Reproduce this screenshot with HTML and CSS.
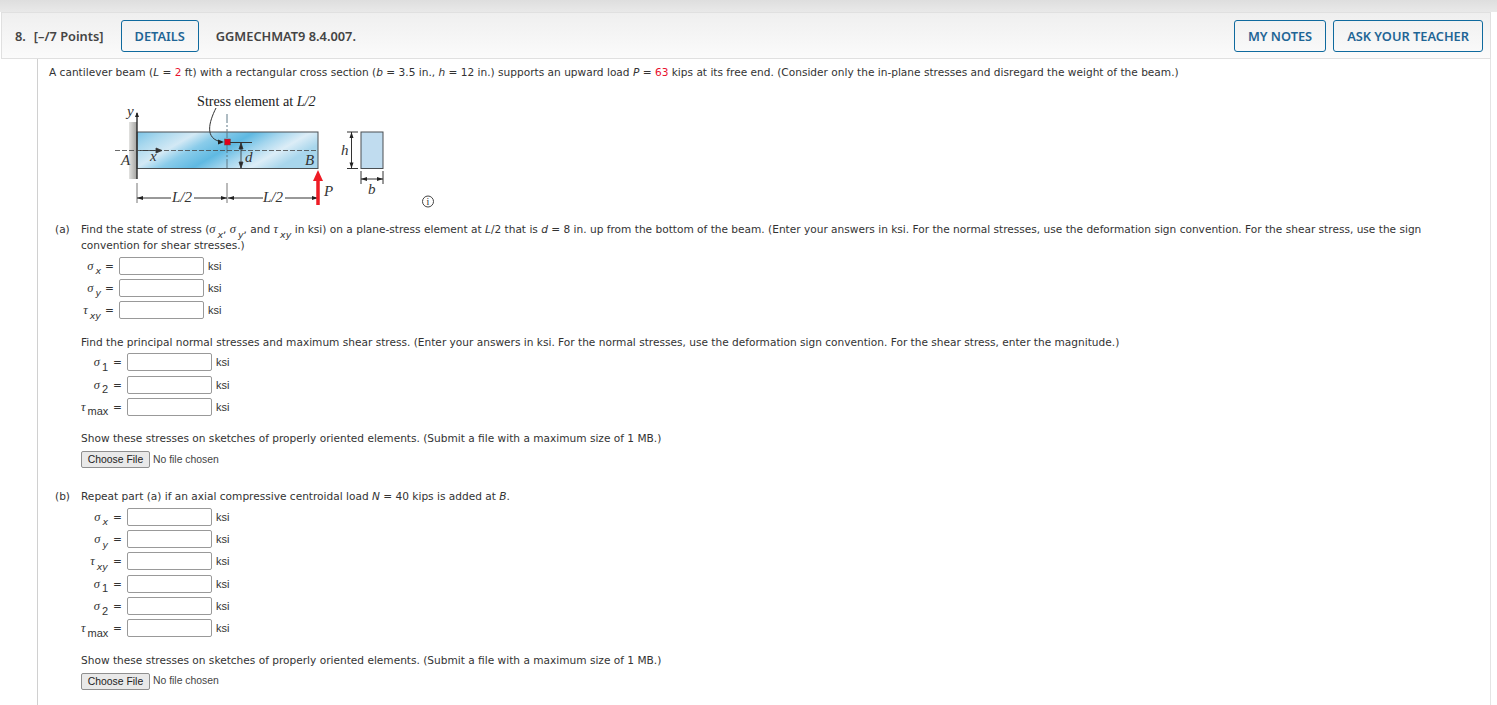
FILE: index.html
```html
<!DOCTYPE html>
<html lang="en">
<head>
  <meta charset="UTF-8">
  <meta name="viewport" content="width=device-width, initial-scale=1.0">
  <title>Question 8</title>
  <link rel="stylesheet" href="styles.css">
</head>
<body>

  <div class="question">
    <!-- Header bar -->
    <div class="header">
      <span class="number">8.</span>
      <span class="points">[&ndash;/7 Points]</span>
      <button class="btn details">DETAILS</button>
      <span class="code">GGMECHMAT9 8.4.007.</span>
      <button class="btn notes">MY NOTES</button>
      <button class="btn">ASK YOUR TEACHER</button>
    </div>

    <!-- Question body -->
    <div class="content">
      <p class="intro">A cantilever beam (<i>L</i> = <span class="red">2</span> ft) with a rectangular cross section (<i>b</i> = 3.5 in., <i>h</i> = 12 in.) supports an upward load <i>P</i> = <span class="red">63</span> kips at its free end. (Consider only the in-plane stresses and disregard the weight of the beam.)</p>

      <svg class="figure" width="350" height="130" viewBox="100 85 350 130">
        <defs>
          <linearGradient id="beam" x1="0" y1="0" x2="1" y2="0.35">
            <stop offset="0" stop-color="#7cc4e6"/>
            <stop offset="0.14" stop-color="#a9d8ee"/>
            <stop offset="0.3" stop-color="#d3e9f5"/>
            <stop offset="0.42" stop-color="#8accea"/>
            <stop offset="0.58" stop-color="#5fb9e2"/>
            <stop offset="0.72" stop-color="#a5d6ee"/>
            <stop offset="0.86" stop-color="#dcedf7"/>
            <stop offset="1" stop-color="#a8d6ec"/>
          </linearGradient>
          <linearGradient id="wall" x1="0" y1="0" x2="1" y2="0">
            <stop offset="0" stop-color="#e2e2e0"/>
            <stop offset="1" stop-color="#a3a3a0"/>
          </linearGradient>
        </defs>
        <text class="fig-text" x="197" y="106">Stress element at <tspan class="fig-it">L/2</tspan></text>
        <rect x="129" y="122" width="8" height="57" fill="url(#wall)"/>
        <rect x="137" y="132" width="181" height="36.5" fill="url(#beam)" stroke="#4a4f52"/>
        <line x1="137" y1="113" x2="137" y2="179" stroke="#2b2b2b" stroke-width="1.4"/>
        <path d="M137 112l-2 5h4z" fill="#222"/>
        <line x1="227" y1="114" x2="227" y2="168" stroke="#5f7886" stroke-dasharray="9 2 2 2"/>
        <line x1="115" y1="150.500" x2="318" y2="150.500" stroke="#444" stroke-width="0.8" stroke-dasharray="5 2"/>
        <path d="M140 150.500h22M156 148l6 2.500-6 2.500z" fill="#333" stroke="#333" stroke-width="0.8"/>
        <path d="M216 108C209 122 204 139 222 142" fill="none" stroke="#333"/>
        <path d="M224 142l-6-2.500v5z" fill="#222"/>
        <rect x="224.500" y="139" width="6" height="6" fill="#e2001a" stroke="#555" stroke-width="0.5"/>
        <line x1="230" y1="142.500" x2="252" y2="142.500" stroke="#333"/>
        <path d="M241 143v25M241 143l-2 6h4zM241 168l-2-6h4z" fill="#222" stroke="#333" stroke-width="0.8"/>
        <text class="fig-small fig-it" x="150" y="161">x</text>
        <text class="fig-small fig-it" x="121" y="165">A</text>
        <text class="fig-small fig-it" x="305" y="165">B</text>
        <text class="fig-small fig-it" x="245" y="162">d</text>
        <text class="fig-small fig-it" x="127" y="116">y</text>

        <path d="M137 183v20M227 183v20M318 183v20" stroke="#777" fill="none"/>
        <path d="M137 198h34M194 198h33M228 198h35M285 198h33" stroke="#333" fill="none"/>
        <path d="M137 198l6-2v4zM227 198l-6-2v4zM228 198l6-2v4zM318 198l-6-2v4z" fill="#222"/>
        <text class="fig-small fig-it" x="172" y="202">L/2</text>
        <text class="fig-small fig-it" x="263" y="202">L/2</text>

        <path d="M318 205V178" stroke="#ee1c25" stroke-width="3.500" fill="none"/>
        <path d="M318 170l5 11h-10z" fill="#ee1c25"/>
        <text class="fig-small fig-it" x="324" y="196">P</text>

        <rect x="361" y="132" width="22" height="36.500" fill="#c0dcef" stroke="#4a4f52"/>
        <path d="M347 132h11M347 168.500h11M351.500 132v36" stroke="#333" fill="none"/>
        <path d="M351.500 132l-2 6h4zM351.500 168.500l-2-6h4z" fill="#222"/>
        <text class="fig-small fig-it" x="341" y="155">h</text>
        <path d="M361 171v13M383 171v13M361 179h22" stroke="#333" fill="none"/>
        <path d="M361 179l6-2v4zM383 179l-6-2v4z" fill="#222"/>
        <text class="fig-small fig-it" x="368" y="194">b</text>

        <circle cx="428" cy="201.500" r="5.500" fill="none" stroke="#444"/>
        <text class="fig-info" x="428" y="205">i</text>
      </svg>

      <div class="part part-a">
        <span class="part-label">(a)</span>
        <div class="part-body">
          <p>Find the state of stress (<span class="sym">&sigma;</span><sub>x</sub>, <span class="sym">&sigma;</span><sub>y</sub>, and <span class="sym">&tau;</span><sub>xy</sub> in ksi) on a plane-stress element at <i>L</i>/2 that is <i>d</i> = 8 in. up from the bottom of the beam. (Enter your answers in ksi. For the normal stresses, use the deformation sign convention. For the shear stress, use the sign convention for shear stresses.)</p>
          <div class="answers narrow">
            <div class="row"><span class="var"><span class="sym">&sigma;</span><sub>x</sub></span><span class="eq">=</span><input type="text"><span class="unit">ksi</span></div>
            <div class="row"><span class="var"><span class="sym">&sigma;</span><sub>y</sub></span><span class="eq">=</span><input type="text"><span class="unit">ksi</span></div>
            <div class="row"><span class="var"><span class="sym">&tau;</span><sub>xy</sub></span><span class="eq">=</span><input type="text"><span class="unit">ksi</span></div>
          </div>
          <p class="after-answers">Find the principal normal stresses and maximum shear stress. (Enter your answers in ksi. For the normal stresses, use the deformation sign convention. For the shear stress, enter the magnitude.)</p>
          <div class="answers">
            <div class="row"><span class="var"><span class="sym">&sigma;</span><sub class="up">1</sub></span><span class="eq">=</span><input type="text"><span class="unit">ksi</span></div>
            <div class="row"><span class="var"><span class="sym">&sigma;</span><sub class="up">2</sub></span><span class="eq">=</span><input type="text"><span class="unit">ksi</span></div>
            <div class="row"><span class="var"><span class="sym">&tau;</span><sub class="up">max</sub></span><span class="eq">=</span><input type="text"><span class="unit">ksi</span></div>
          </div>
          <p class="after-answers">Show these stresses on sketches of properly oriented elements. (Submit a file with a maximum size of 1 MB.)</p>
          <div class="upload"><button class="choose">Choose File</button><span>No file chosen</span></div>
        </div>
      </div>

      <div class="part part-b">
        <span class="part-label">(b)</span>
        <div class="part-body">
          <p>Repeat part (a) if an axial compressive centroidal load <i>N</i> = 40 kips is added at <i>B</i>.</p>
          <div class="answers">
            <div class="row"><span class="var"><span class="sym">&sigma;</span><sub>x</sub></span><span class="eq">=</span><input type="text"><span class="unit">ksi</span></div>
            <div class="row"><span class="var"><span class="sym">&sigma;</span><sub>y</sub></span><span class="eq">=</span><input type="text"><span class="unit">ksi</span></div>
            <div class="row"><span class="var"><span class="sym">&tau;</span><sub>xy</sub></span><span class="eq">=</span><input type="text"><span class="unit">ksi</span></div>
            <div class="row"><span class="var"><span class="sym">&sigma;</span><sub class="up">1</sub></span><span class="eq">=</span><input type="text"><span class="unit">ksi</span></div>
            <div class="row"><span class="var"><span class="sym">&sigma;</span><sub class="up">2</sub></span><span class="eq">=</span><input type="text"><span class="unit">ksi</span></div>
            <div class="row"><span class="var"><span class="sym">&tau;</span><sub class="up">max</sub></span><span class="eq">=</span><input type="text"><span class="unit">ksi</span></div>
          </div>
          <p class="after-answers last-show">Show these stresses on sketches of properly oriented elements. (Submit a file with a maximum size of 1 MB.)</p>
          <div class="upload"><button class="choose">Choose File</button><span>No file chosen</span></div>
        </div>
      </div>
    </div>
  </div>

</body>
</html>
```

FILE: styles.css
```css
* {
  margin: 0;
  padding: 0;
  box-sizing: border-box;
}

html, body {
  height: 100%;
  overflow: hidden;
  background: white;
}

body {
  font-family: "DejaVu Sans", sans-serif;
  font-size: 10.58px;
  line-height: 16px;
  color: #333;
  background: linear-gradient(to bottom, #dedede 0, #e9e9e9 12px, white 12px);
}

.question {
  padding-top: 12px;
  padding-right: 6px;
}

/* Header bar */
.header {
  display: flex;
  align-items: center;
  height: 47px;
  padding-left: 13px;
  padding-right: 7px;
  margin-left: 1px;
  border: 1px solid #e0e0e0;
  background: linear-gradient(to bottom, #efefef, #fbfbfb);
  font-family: "Noto Sans", "Open Sans", sans-serif;
  font-size: 12.8px;
  font-weight: 600;
  color: #444;
}

.number {
  margin-right: 8px;
}

.points {
  margin-right: 17px;
}

.code {
  margin-left: 17px;
  margin-right: auto;
}

.btn {
  height: 32px;
  padding: 0 13px;
  border: 1.5px solid #0f6a9e;
  border-radius: 3px;
  background: transparent;
  font-family: inherit;
  font-size: 12.8px;
  font-weight: 600;
  color: #1f6595;
}

.notes {
  margin-right: 7px;
}

/* Question body */
.content {
  margin-left: 37px;
  padding-left: 11px;
  height: 650px;
  border-left: 1px solid #d0d0d0;
  border-right: 1px solid #e4e4e4;
}

.intro {
  padding-top: 5px;
}

.figure {
  display: block;
  margin-left: 51px;
  margin-top: 5px;
}

.fig-text {
  font-family: "Liberation Serif", serif;
  font-size: 14.2px;
  fill: #222;
}

.fig-small {
  font-family: "Liberation Serif", serif;
  font-size: 15px;
  fill: #333;
}

.fig-it {
  font-style: italic;
}

.fig-info {
  font-family: "Liberation Serif", serif;
  font-size: 10px;
  text-anchor: middle;
  fill: #333;
}

.red {
  color: #e8112d;
}

.part {
  display: flex;
}

.part-a {
  margin-top: 6px;
}

.part-b {
  margin-top: 20px;
}

.part-label {
  width: 26px;
  margin-left: 6px;
  flex-shrink: 0;
}

.part-body {
  flex: 1;
  padding-right: 60px;
}

.sym {
  font-family: "Liberation Serif", serif;
  font-style: italic;
  font-size: 12.5px;
}

sub {
  margin-left: 2px;
  font-family: "DejaVu Sans", sans-serif;
  font-style: italic;
  font-size: 9.5px;
  line-height: 0;
  vertical-align: -4.5px;
}

sub.up {
  font-family: "Liberation Sans", sans-serif;
  font-style: normal;
  font-size: 11px;
}

.answers {
  margin-top: 1.4px;
}

.row {
  display: flex;
  align-items: center;
  height: 22.3px;
}

.var {
  width: 27px;
  text-align: right;
  white-space: nowrap;
}

.eq {
  width: 19px;
  padding-left: 5px;
}

.row input {
  width: 85px;
  height: 18px;
  border: 1px solid #999;
  border-radius: 2px;
  background: white;
}

.narrow .var {
  width: 20px;
}

.narrow .eq {
  width: 18px;
  padding-left: 4px;
}

.unit {
  margin-left: 4px;
  font-family: "Liberation Sans", sans-serif;
  font-size: 11px;
  color: #333;
}

.after-answers {
  margin-top: 12.4px;
}

.last-show {
  margin-top: 12px;
}

.upload {
  display: flex;
  align-items: center;
  margin-top: 5px;
  font-family: "Liberation Sans", sans-serif;
  font-size: 10.4px;
  color: #444;
}

.choose {
  width: 69px;
  height: 17px;
  margin-right: 3px;
  border: 1px solid #8f8f8f;
  border-radius: 2px;
  background: #e9e9e9;
  font-family: inherit;
  font-size: 10.4px;
  color: #222;
}
```
